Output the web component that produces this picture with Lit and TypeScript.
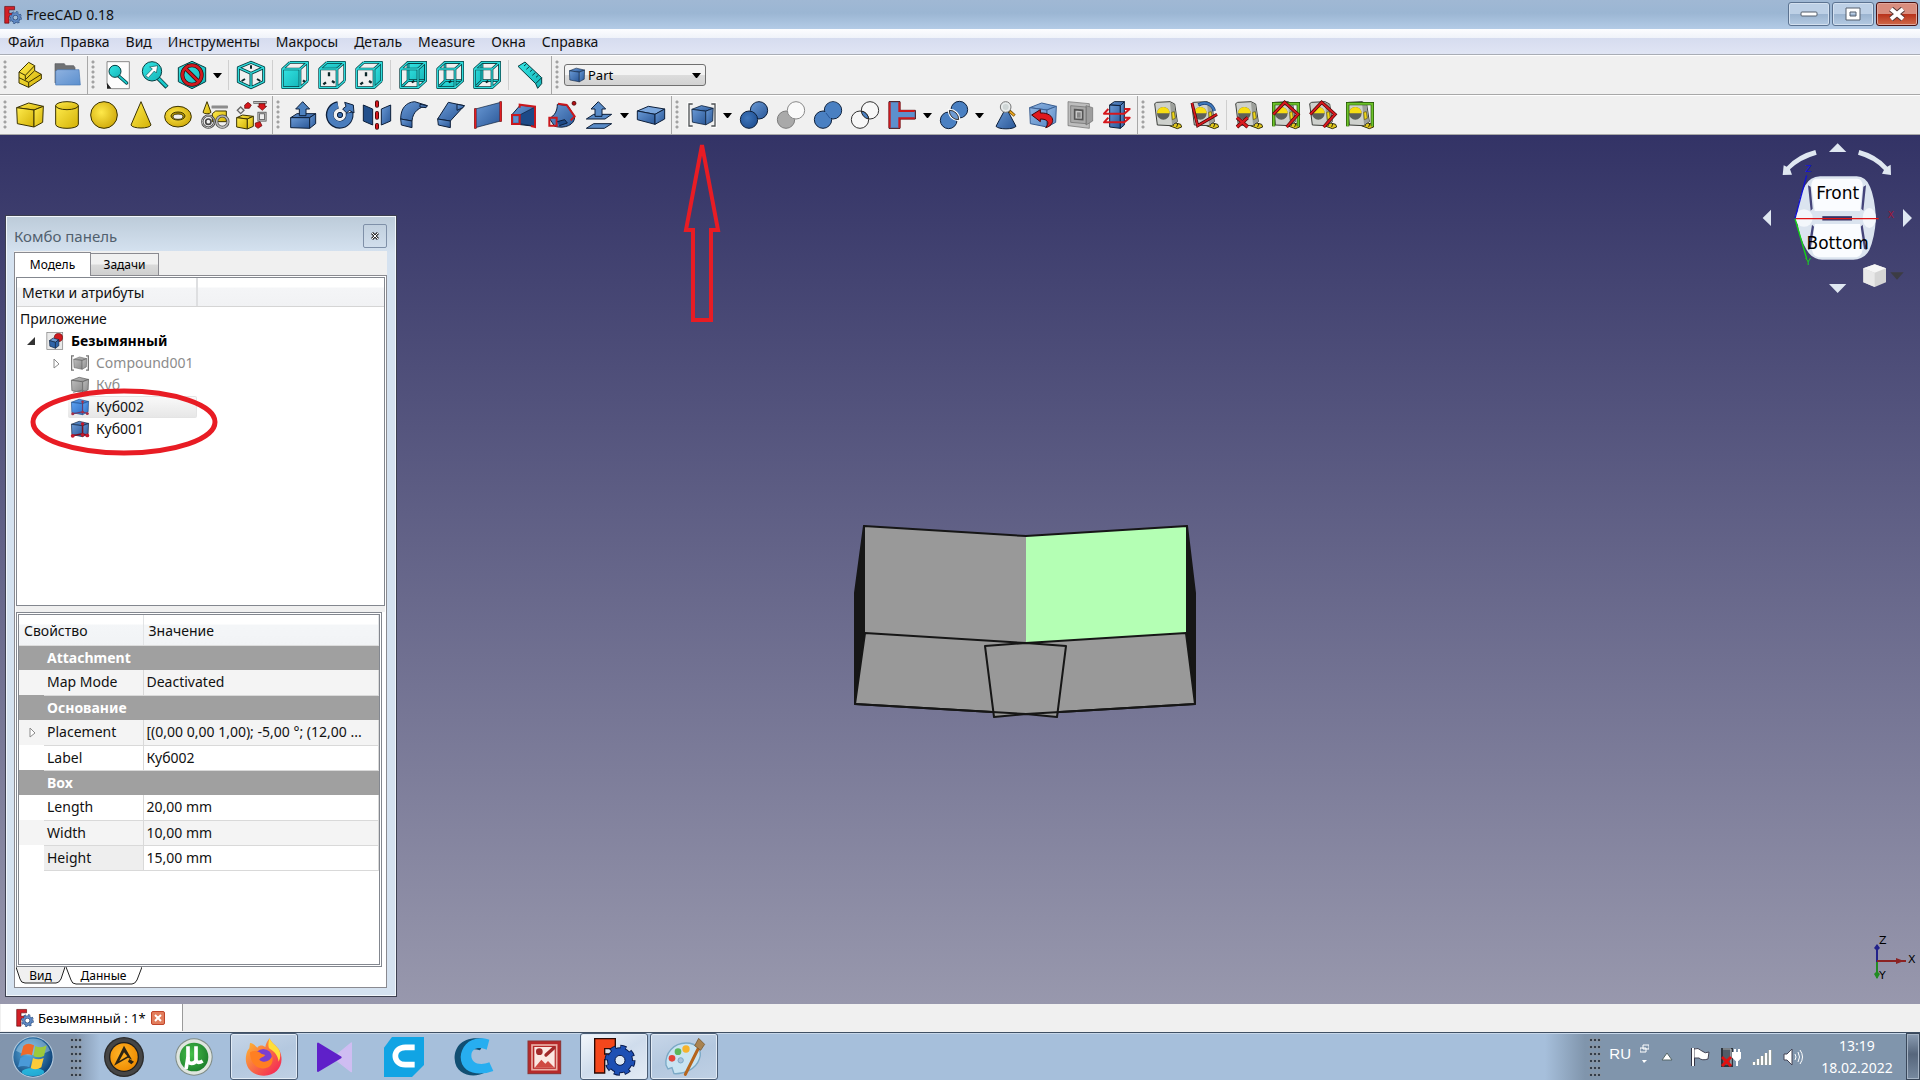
import { LitElement, html, svg, css, nothing } from "lit";
import { customElement, state } from "lit/decorators.js";

type Tool = { id: string; label: string; menu?: boolean } | "sep";

const INK = "#0d1f3a";
const cubeFaces: Record<string, string> = {
  front: "2,22 58,22 58,82 2,82",
  top: "2,22 26,2 82,2 58,22",
  right: "58,22 82,2 82,60 58,82",
  rear: "26,2 82,2 82,60 26,60",
  bottom: "2,82 26,60 82,60 58,82",
  left: "2,22 26,2 26,60 2,82",
};

const wireCube = (face: string) => {
  const back = "M27 4H80V59H27ZM5 80L27 59";
  const near = "M5 24H57V80H5ZM5 24L27 4M57 24L80 4M57 80L80 59M27 4H80V59";
  const fill = svg`<polygon points=${cubeFaces[face]} fill="url(#teal)" />`;
  const behind = face === "rear" || face === "bottom" || face === "left";
  return svg`
    ${behind ? fill : nothing}
    ${behind
      ? svg`<g fill="none" stroke-linejoin="round"><path d=${back} stroke="#063c3f" stroke-width="8" /><path d=${back} stroke="#19c9cb" stroke-width="4" /></g>`
      : svg`<path d="M33 34v12M16 70l8 -6M42 60l8 5" stroke="#0b2527" stroke-width="7" />${face === "front" ? svg`<path d="M66 58l8 6" stroke="#0b2527" stroke-width="7" />` : nothing}${fill}`}
    <g fill="none" stroke-linejoin="round">
      <path d=${near} stroke="#063c3f" stroke-width="8" /><path d=${near} stroke="#2fdcdc" stroke-width="4" />
    </g>
    ${behind ? svg`<path d="M38 64l8 -4" stroke="#0b2527" stroke-width="6" />` : nothing}`;
};

const tape = () => svg`
  <path d="M50 62L80 70L83 78L70 83L46 74Z" fill="#e3c91c" stroke="#35320f" stroke-width="3" />
  <path d="M60 67l-3 8M71 69l-3 9" stroke="#35320f" stroke-width="3" />
  <path d="M2 8L8 4L48 2L62 9L70 62L52 74L10 72Z" fill="#ced1cd" stroke="#3c3f3b" stroke-width="3" stroke-linejoin="round" />
  <path d="M48 4L61 10L68 61L54 71Z" fill="#9c9f9a" />
  <circle cx="28" cy="37" r="19" fill="#5d605a" />
  <path d="M9 37A19 19 0 0 1 47 37Z" fill="#f7dd12" />
  <path d="M53 34l8 -2l3 20l-9 4Z" fill="#f0d51a" stroke="#55510f" stroke-width="2" />`;

const box = (fill: string, stroke: string) => svg`
  <g stroke=${stroke} stroke-width="3" stroke-linejoin="round" fill=${`url(#${fill})`}>
    <polygon points="2,20 38,6 82,16 54,27" /><polygon points="2,20 54,27 54,78 4,68" /><polygon points="54,27 82,16 80,64 54,78" />
  </g>`;

const disc = (x: number, y: number, r: number, fill: string, stroke = INK) =>
  svg`<circle cx=${x} cy=${y} r=${r} fill=${fill} stroke=${stroke} stroke-width="3" />`;

const icons: Record<string, () => unknown> = {
  part: () => svg`<g fill="url(#yellow)" stroke="#3a3203" stroke-width="3" stroke-linejoin="round">
    <path d="M9 33L38 4L56 14V29L76 40V54L38 79L9 66Z" /><path d="M9 33L28 43L56 14M28 43V56L56 29M9 50L38 64L76 40M38 64V79" fill="none" /></g>`,
  folder: () => svg`<path d="M6 8H34L38 14H62L66 20V66H6Z" fill="#6f7174" stroke="#55585c" stroke-width="2" />
    <path d="M14 26H78L82 72H8V30Z" fill="url(#folder)" stroke="#4a78b4" stroke-width="2" />`,
  fit: () => svg`<path d="M9 2H76V83H22L9 70Z" fill="#fdfdfd" stroke="#555" stroke-width="2" /><path d="M9 65L22 83H9Z" fill="#222" />
    <path d="M44 45L68 66" stroke="#063c3f" stroke-width="10" stroke-linecap="round" /><path d="M44 45L68 66" stroke="#19c9cb" stroke-width="5" stroke-linecap="round" />
    ${disc(33, 31, 18, "url(#teal)", "#063c3f")}`,
  zoomsel: () => svg`<path d="M50 50L78 79" stroke="#063c3f" stroke-width="13" /><path d="M51 51L77 77" stroke="#19c9cb" stroke-width="8" />
    ${disc(33, 31, 29, "url(#teal)", "#063c3f")}<path d="M14 44L34 24L26 18L50 14L46 36L40 30L22 50Z" fill="#fff" stroke="#155" stroke-width="2" />`,
  style: () => svg`<polygon points="42,1 83,20 83,62 42,83 1,62 1,20" fill="url(#teal)" stroke="#063c3f" stroke-width="3" />
    <g fill="none"><circle cx="42" cy="42" r="29" stroke="#2b0505" stroke-width="12" /><path d="M22 22L62 62" stroke="#2b0505" stroke-width="12" />
    <circle cx="42" cy="42" r="29" stroke="#d01a1f" stroke-width="8" /><path d="M22 22L62 62" stroke="#d01a1f" stroke-width="8" /></g>`,
  iso: () => svg`<g fill="none" stroke-linejoin="round"><path d="M42 4L80 20V62L42 80L4 62V20ZM4 20L42 37L80 20M42 37V80" stroke="#063c3f" stroke-width="9" />
    <path d="M42 4L80 20V62L42 80L4 62V20ZM4 20L42 37L80 20M42 37V80" stroke="#2fdcdc" stroke-width="4" /></g>
    <path d="M42 13v10M14 60l10 -6M60 54l10 6" stroke="#0b2527" stroke-width="6" />`,
  ruler: () => svg`<path d="M3 16L24 3L74 50L74 68L62 82L56 68Z" fill="url(#teal)" stroke="#063c3f" stroke-width="3" stroke-linejoin="round" />
    <path d="M56 68L74 50M28 9l-7 6M37 17l-9 8M46 26l-7 6M55 35l-9 8M64 43l-7 6" stroke="#063c3f" stroke-width="3" />`,
  cube: () => box("yellow", "#3a3203"),
  cylinder: () => svg`<g fill="url(#yellow)" stroke="#3a3203" stroke-width="3"><path d="M8 14V70C8 86 76 86 76 70V14Z" /><ellipse cx="42" cy="14" rx="34" ry="12" /></g>`,
  sphere: () => disc(42, 42, 40, "url(#yellowr)", "#3a3203"),
  cone: () => svg`<path d="M42 2L72 72C68 84 16 84 12 72Z" fill="url(#yellow)" stroke="#3a3203" stroke-width="3" stroke-linejoin="round" />`,
  torus: () => svg`<g stroke="#3a3203" stroke-width="3"><ellipse cx="42" cy="47" rx="40" ry="31" fill="url(#yellowr)" /><ellipse cx="42" cy="45" rx="21" ry="12" fill="#b99a08" /><ellipse cx="42" cy="47" rx="15" ry="8" fill="#f0f0f0" /></g>`,
  primitives: () => svg`<path d="M32 18H80" stroke="#555" stroke-width="8" /><path d="M33 18H79" stroke="#aaa" stroke-width="4" />
    <g fill="url(#yellow)" stroke="#3a3203" stroke-width="3"><path d="M18 2L30 34C26 40 10 40 6 34Z" /><path d="M34 38L44 30H76V62H34Z" /></g>
    <g fill="none"><circle cx="22" cy="62" r="18" stroke="#444" stroke-width="7" /><circle cx="22" cy="62" r="18" stroke="#bbb" stroke-width="3" />
    <circle cx="22" cy="62" r="8" stroke="#444" stroke-width="5" /><circle cx="64" cy="62" r="17" stroke="#444" stroke-width="9" /><circle cx="64" cy="62" r="17" stroke="#b6b6b6" stroke-width="5" /></g>`,
  builder: () => svg`<g fill="url(#yellow)" stroke="#3a3203" stroke-width="3" stroke-linejoin="round"><path d="M-4 50L14 42L46 46L28 54Z" /><path d="M-4 50L28 54V84L-4 78Z" /><path d="M28 54L46 46V76L28 84Z" /></g>
    <path d="M8 18l10 10l-10 10l-10 -10Z" fill="#eee" stroke="#666" stroke-width="4" /><path d="M46 4H86" stroke="#444" stroke-width="8" /><path d="M47 4H84" stroke="#bbb" stroke-width="4" />
    <rect x="62" y="36" width="20" height="22" fill="#eee" stroke="#444" stroke-width="7" /><rect x="62" y="36" width="20" height="22" fill="none" stroke="#bbb" stroke-width="3" />
    <g fill="#d6171c" stroke="#500" stroke-width="2"><path d="M20 12l10 -8l10 8l-6 10l-14 0Z" /><path d="M63 8h18v8h5l-13 12l-14 -12h4Z" /><path d="M52 66l14 -4l6 12l-12 8l-8 -6Z" /></g>`,
  extrude: () => svg`<g fill="url(#blue)" stroke=${INK} stroke-width="3" stroke-linejoin="round"><path d="M5 50L24 38H80L62 50Z" /><path d="M5 50H62V82L5 80Z" /><path d="M62 50L80 38V68L62 82Z" />
    <path d="M41 2L62 24H51V44H31V24H20Z" fill="#4e82c0" /></g>`,
  revolve: () => svg`<g fill="none"><path d="M36 12A30 30 0 1 0 70 34" stroke=${INK} stroke-width="23" /><path d="M36 13A29 29 0 1 0 70 36" stroke="#4a7dbd" stroke-width="18" /></g>
    <path d="M56 4L82 12L84 36L70 28L62 36L50 24L60 16Z" fill="#4a7dbd" stroke=${INK} stroke-width="3" />
    ${disc(42, 42, 12, "#f4f4f4", "#f4f4f4")}${disc(42, 42, 8, "#3c6eae")}`,
  mirror: () => svg`<g fill="url(#blue)" stroke=${INK} stroke-width="3"><path d="M1 12L29 24V72L1 60Z" fill="#23508c" /><path d="M55 24L83 12V60L55 72Z" /></g>
    <path d="M42 4V14M42 36V50M42 72V80" stroke="#3b0000" stroke-width="12" stroke-linecap="round" /><path d="M42 4V14M42 36V50M42 72V80" stroke="#d6171c" stroke-width="7" stroke-linecap="round" />`,
  fillet: () => svg`<g fill="url(#blue)" stroke=${INK} stroke-width="3" stroke-linejoin="round"><path d="M2 54C2 22 18 4 44 2L82 14C58 18 38 32 36 60Z" /><path d="M2 54L36 60V80L4 72Z" /><path d="M60 10L82 14L78 20L60 18Z" /></g>`,
  chamfer: () => svg`<g fill="url(#blue)" stroke=${INK} stroke-width="3" stroke-linejoin="round"><path d="M2 54L34 4L82 14L40 60Z" /><path d="M2 54L40 60V80L4 72Z" /><path d="M60 10L82 14L78 20L60 28Z" /></g>`,
  face: () => svg`<path d="M4 24L80 4V60L4 80Z" fill="url(#blue)" stroke=${INK} stroke-width="2" />
    <path d="M4 22V83M80 1V62" stroke="#7d0a0c" stroke-width="7" /><path d="M4 24V81M80 3V60" stroke="#e01c20" stroke-width="4" />`,
  loft: () => svg`<path d="M2 42L28 12L72 18V76L4 68Z" fill="url(#blue)" stroke=${INK} stroke-width="3" /><path d="M26 42L72 18V76L26 68Z" fill="#1d4a88" stroke=${INK} stroke-width="2" />
    <path d="M26 20V11L72 17V78L60 75M3 42H26V69H3Z" fill="none" stroke="#c9181d" stroke-width="6" /><rect x="8" y="47" width="13" height="17" fill="#5f93cf" />`,
  sweep: () => svg`<path d="M28 10C28 30 20 44 4 52L20 76C50 84 80 72 80 48L60 14Z" fill="url(#blue)" stroke=${INK} stroke-width="3" />
    <path d="M30 8L56 12L80 46L68 58M4 50H26V74H4Z" fill="none" stroke="#c9181d" stroke-width="6" /><path d="M28 62L50 56L58 66L34 74" fill="#1d4a88" stroke=${INK} stroke-width="3" />
    <circle cx="78" cy="7" r="6" fill="#b01014" stroke="#300" stroke-width="2" />`,
  offset: () => svg`<g fill="#5a8cc8" stroke=${INK} stroke-width="3" stroke-linejoin="round"><path d="M4 54L26 40H80L60 54Z" /><path d="M4 82L26 68H80L58 82Z" /><path d="M40 2L62 24H51V46H30V24H18Z" /></g>`,
  thickness: () => svg`<g fill="url(#blue)" stroke=${INK} stroke-width="3" stroke-linejoin="round"><path d="M1 30L34 16L83 24L54 40Z" fill="#7aa6dc" /><path d="M1 30L54 40V70L1 56Z" /><path d="M54 40L83 24V54L54 70Z" /></g>`,
  compound: () => svg`<g transform="translate(10 9) scale(.8 .8)">${box("blue", INK)}</g><path d="M12 8H2V76H12M72 8H82V76H72" fill="none" stroke="#fff" stroke-width="8" /><path d="M14 9H3V75H14M70 9H81V75H70" fill="none" stroke="#4b4f52" stroke-width="4" />`,
  boolean: () => svg`${disc(57, 28, 26, "url(#blue)")}${disc(27, 56, 26, "url(#bluer)")}`,
  cut: () => svg`${disc(27, 56, 26, "#a9a9a9", "#7c7c7c")}${disc(57, 28, 26, "#fafafa", "#8a8a8a")}`,
  union: () => svg`${disc(57, 28, 26, "#4a80c2")}${disc(27, 56, 26, "#4a80c2")}<circle cx="57" cy="28" r="24" fill="#4a80c2" /><path d="M36 36L48 52" stroke="#2a5797" stroke-width="3" />`,
  common: () => svg`${disc(57, 28, 26, "#f7f7f7", "#333")}${disc(27, 56, 26, "#f7f7f7", "#333")}<path d="M31 30A26 26 0 0 1 53 54A26 26 0 0 1 31 30Z" fill="#4a80c2" stroke="#222" stroke-width="3" />`,
  join: () => svg`<path d="M3 2H36V28H82V54H36V82H3Z" fill="#5c90ce" stroke="#3b0a10" stroke-width="3" /><path d="M5 4V80M34 4V30H80M80 52H34V80" fill="none" stroke="#c9181d" stroke-width="6" />`,
  split: () => svg`${disc(58, 26, 25, "#4a80c2")}${disc(26, 58, 25, "#4a80c2")}<path d="M28 28A27 27 0 0 1 56 56A27 27 0 0 1 28 28Z" fill="#4a80c2" stroke="#fff" stroke-width="9" /><path d="M28 28A27 27 0 0 1 56 56A27 27 0 0 1 28 28Z" fill="#6d9bd3" stroke="#333" stroke-width="3" />`,
  check: () => svg`<path d="M42 20L72 76C64 86 20 86 12 76Z" fill="url(#blue)" stroke=${INK} stroke-width="3" /><path d="M52 30L68 44" stroke="#6b4a08" stroke-width="9" /><path d="M54 32L67 43" stroke="#f0a820" stroke-width="5" />${disc(41, 18, 16, "#e8ecec", "#777")}<circle cx="41" cy="18" r="9" fill="#cfd6d6" />`,
  defeature: () => svg`${box("soft", "#3b5f92")}<path d="M8 42L34 26V36C78 34 82 72 50 80C62 66 58 54 34 54V62Z" fill="#e01a1f" stroke="#4a0506" stroke-width="3" stroke-linejoin="round" />`,
  offset3d: () => svg`<g stroke="#6a6a6a" stroke-width="2"><path d="M6 2L70 8V82L6 74Z" fill="#bdbdbd" /><path d="M60 14L80 20V60L60 72Z" fill="#9d9d9d" /><path d="M14 14L60 18V68L14 64Z" fill="#a9a9a9" /></g><path d="M26 26L50 28V56L26 54Z" fill="#c8c8c8" stroke="#555" stroke-width="5" /><path d="M33 34H44V50H33Z" fill="#888" />`,
  sections: () => svg`<g fill="url(#blue)" stroke=${INK} stroke-width="3" stroke-linejoin="round"><path d="M20 12L34 2H64L52 14Z" /><path d="M20 12L52 14V82L20 78Z" /><path d="M52 14L64 2V72L52 82Z" /></g>
    <g fill="none" stroke="#d6171c" stroke-width="6" stroke-linejoin="round"><path d="M16 24L3 38H64L80 24H64" /><path d="M16 50L3 64H64L80 50H64" /></g>`,
  mlinear: () => tape(),
  mangular: () => svg`${tape()}<path d="M22 12C42 0 64 8 70 30" fill="none" stroke="#173c70" stroke-width="10" /><path d="M22 12C42 0 64 8 70 30" fill="none" stroke="#3f77ba" stroke-width="6" /><path d="M3 6L20 74L78 40" fill="none" stroke="#4a0506" stroke-width="9" /><path d="M3 6L20 74L78 40" fill="none" stroke="#d81a1f" stroke-width="5" />`,
  mclear: () => svg`${tape()}<path d="M6 50L38 78M38 50L6 78" stroke="#4a0506" stroke-width="11" /><path d="M6 50L38 78M38 50L6 78" stroke="#d81a1f" stroke-width="7" />`,
  mtoggle: () => svg`${tape()}<path d="M5 76V8H79V76" fill="none" stroke="#1f4a05" stroke-width="10" /><path d="M5 76V8H79V76" fill="none" stroke="#6cc22a" stroke-width="6" />
    <path d="M4 40L38 4L78 40L44 78" fill="none" stroke="#4a0506" stroke-width="10" /><path d="M4 40L38 4L78 40L44 78" fill="none" stroke="#d81a1f" stroke-width="6" />`,
  mtoggle3d: () => svg`${tape()}<path d="M4 40L38 4L78 40L44 78" fill="none" stroke="#4a0506" stroke-width="10" /><path d="M4 40L38 4L78 40L44 78" fill="none" stroke="#d81a1f" stroke-width="6" />`,
  mdelta: () => svg`${tape()}<path d="M5 76V8H79V76" fill="none" stroke="#1f4a05" stroke-width="10" /><path d="M5 76V8H79V76" fill="none" stroke="#6cc22a" stroke-width="6" />`,
  document: () => svg`<rect x="4" y="2" width="74" height="80" fill="#e9e9e9" stroke="#777" stroke-width="3" />${disc(58, 26, 19, "#d01a1f", "#600")}
    <g fill="#2f64a8" stroke=${INK} stroke-width="3" stroke-linejoin="round"><path d="M16 40L34 28L60 36L44 48Z" fill="#6d9bd3" /><path d="M16 40L44 48V76L18 66Z" /><path d="M44 48L60 36V64L44 76Z" /></g>`,
  compoundgray: () => svg`<g transform="translate(11 9) scale(.76 .8)">${box("gray", "#555")}</g><path d="M14 9H3V75H14M70 9H81V75H70" fill="none" stroke="#777" stroke-width="6" />`,
  boxgray: () => svg`${box("gray", "#555")}<path d="M54 27V66L10 76M54 66L78 76" stroke="#777" stroke-width="5" fill="none" />`,
  boxlight: () => svg`${box("bright", "#1c4c8c")}<path d="M54 20V64L8 74M54 64L76 72" stroke="#6b3a6d" stroke-width="5" fill="none" /><g fill="#a33048"><circle cx="54" cy="18" r="6" /><circle cx="8" cy="74" r="7" /><circle cx="54" cy="66" r="6" /><circle cx="76" cy="72" r="7" /></g>`,
  boxblue: () => svg`${box("blue", INK)}<path d="M54 20V64L8 74M54 64L76 72" stroke="#7c1020" stroke-width="7" fill="none" /><g fill="#c4182a"><circle cx="54" cy="18" r="8" /><circle cx="8" cy="74" r="9" /><circle cx="54" cy="70" r="8" /><circle cx="76" cy="72" r="9" /></g>`,
  bluebox: () => box("blue", INK),
  freecad: () => svg`<path d="M8 2H54V18H28V34H46V48H28V80H8Z" fill="#d21f26" stroke="#5d0a0d" stroke-width="3" />
    <circle cx="58" cy="54" r="17" fill="none" stroke="#24426f" stroke-width="14" /><circle cx="58" cy="54" r="25" fill="none" stroke="#24426f" stroke-width="9" stroke-dasharray="10 9.6" />
    <circle cx="58" cy="54" r="17" fill="none" stroke="#6089c4" stroke-width="9" /><circle cx="58" cy="54" r="24" fill="none" stroke="#6089c4" stroke-width="7" stroke-dasharray="8 10.8" stroke-dashoffset="-1" />`,
};
for (const f of Object.keys(cubeFaces)) icons[`view-${f}`] = () => wireCube(f);

const icon = (id: string, size = "i28") =>
  html`<svg class=${size} viewBox="0 0 84 84" aria-hidden="true">${icons[id]()}</svg>`;

const taskIcons: Record<string, () => unknown> = {
  aimp: () => svg`<circle cx="60" cy="60" r="60" fill="#2b2b2b" /><circle cx="60" cy="60" r="56" fill="#454545" /><circle cx="60" cy="60" r="45" fill="#1e1e1e" /><circle cx="60" cy="60" r="41" fill="url(#amber)" />
    <path d="M60 26L84 68L72 62L30 86Z" fill="#2d2414" /><path d="M60 46L46 72L70 58Z" fill="#fba81a" /><path d="M76 66L90 74L82 82L72 74Z" fill="#2d2414" />`,
  utorrent: () => svg`<circle cx="60" cy="60" r="56" fill="#7f8c86" /><circle cx="60" cy="60" r="53" fill="#dfe5df" /><circle cx="60" cy="60" r="43" fill="url(#green)" />
    <path d="M42 28V70C42 82 62 82 66 70V28V66C66 78 76 78 86 72" fill="none" stroke="#fff" stroke-width="11" /><path d="M42 60L36 96" stroke="#fff" stroke-width="11" />`,
  firefox: () => svg`<path d="M18 18C26 18 34 26 40 32C48 22 58 26 64 30C66 16 76 6 76 4C84 20 98 26 106 40C124 76 104 116 60 116C18 116 2 84 6 58C8 44 12 38 16 34Z" fill="url(#fire)" />
    <path d="M76 4C84 20 98 26 106 40C110 50 110 64 104 74C102 56 92 44 78 36C70 32 74 14 76 4Z" fill="#ffde3a" />
    <circle cx="58" cy="62" r="26" fill="#7a3fd0" /><path d="M18 46C30 40 42 40 52 50L64 54C58 62 50 60 46 68C58 80 78 74 84 58C92 84 70 98 52 94C30 90 18 70 18 46Z" fill="#ff7f22" />`,
  player: () => svg`<path d="M112 18V104L58 62Z" fill="#cfbdf2" stroke="#cfbdf2" stroke-width="4" stroke-linejoin="round" /><path d="M12 20V102L80 61Z" fill="#5f20c9" stroke="#5f20c9" stroke-width="6" stroke-linejoin="round" />`,
  cura: () => svg`<path d="M24 0H120V84L84 120H0V32Z" fill="#11a4e4" /><path d="M92 31H64C24 31 24 83 64 83H92" fill="none" stroke="#fff" stroke-width="17" />`,
  ccc: () => svg`<path d="M98 8C30 -8 0 28 2 66C4 116 60 124 90 108L78 84C50 92 34 80 34 62C34 40 52 32 78 40Z" fill="#114f73" /><path d="M106 8C50 -8 22 28 20 60C20 106 70 120 118 102L106 76C74 88 52 76 52 56C52 34 74 28 98 38Z" fill="#27aef0" />`,
  viewer: () => svg`<rect x="12" y="12" width="98" height="98" fill="#b62a2a" stroke="#8a3434" stroke-width="3" /><rect x="24" y="24" width="74" height="74" fill="none" stroke="#eab0a6" stroke-width="5" /><rect x="31" y="30" width="61" height="62" fill="#fbe8e2" />
    <circle cx="46" cy="44" r="10" fill="#a22a2a" /><path d="M66 54L90 32" stroke="#a22a2a" stroke-width="10" stroke-linecap="round" /><path d="M32 92L52 68L64 80L72 72L92 92Z" fill="#cf4a42" />`,
  freecad: () => svg`<path d="M2 5H64V35H32V51H54V68H32V108H2Z" fill="#f4471c" stroke="#2b0a05" stroke-width="4" />
    <circle cx="78" cy="70" r="38" fill="none" stroke="#081a4c" stroke-width="17" stroke-dasharray="17 12.8" /><circle cx="78" cy="70" r="25" fill="none" stroke="#081a4c" stroke-width="28" />
    <circle cx="78" cy="70" r="37" fill="none" stroke="#1d4fb4" stroke-width="13" stroke-dasharray="13 16" stroke-dashoffset="-2" /><circle cx="78" cy="70" r="25" fill="none" stroke="#1d4fb4" stroke-width="22" /><circle cx="78" cy="70" r="15" fill="#dde8f4" stroke="#081a4c" stroke-width="3" />`,
  paint: () => svg`<path d="M6 84C2 48 30 18 66 18C100 18 116 42 106 66C96 96 60 112 30 110L24 92L12 96Z" fill="#c9e4f2" stroke="#7ba9c6" stroke-width="4" /><circle cx="50" cy="70" r="8" fill="#a9c3dc" stroke="#7ba9c6" stroke-width="3" />
    <circle cx="24" cy="64" r="10" fill="#e2443a" /><circle cx="42" cy="44" r="10" fill="#5cb85a" /><circle cx="66" cy="36" r="11" fill="#f6b32c" />
    <path d="M102 36L64 112" stroke="#b5651d" stroke-width="9" stroke-linecap="round" /><path d="M92 26L104 4L122 22L110 40Z" fill="#a98350" stroke="#6d4c21" stroke-width="2" />`,
};

const GROUP_A: Tool[][] = [
  [{ id: "part", label: "Создать деталь" }, { id: "folder", label: "Создать группу" }],
  [
    { id: "fit", label: "Показать всё" }, { id: "zoomsel", label: "Показать выделенное" }, { id: "style", label: "Стиль отображения", menu: true }, "sep",
    { id: "iso", label: "Изометрия" }, "sep",
    { id: "view-front", label: "Спереди" }, { id: "view-top", label: "Сверху" }, { id: "view-right", label: "Справа" }, "sep",
    { id: "view-rear", label: "Сзади" }, { id: "view-bottom", label: "Снизу" }, { id: "view-left", label: "Слева" }, "sep",
    { id: "ruler", label: "Измерить расстояние" },
  ],
];
const GROUP_B: Tool[][] = [
  [
    { id: "cube", label: "Куб" }, { id: "cylinder", label: "Цилиндр" }, { id: "sphere", label: "Сфера" }, { id: "cone", label: "Конус" },
    { id: "torus", label: "Тор" }, { id: "primitives", label: "Примитивы" }, { id: "builder", label: "Построитель фигур" },
  ],
  [
    { id: "extrude", label: "Выдавить" }, { id: "revolve", label: "Вращать" }, { id: "mirror", label: "Отразить" }, { id: "fillet", label: "Скругление" },
    { id: "chamfer", label: "Фаска" }, { id: "face", label: "Поверхность" }, { id: "loft", label: "Профиль" }, { id: "sweep", label: "Сдвиг" },
    { id: "offset", label: "Смещение", menu: true }, { id: "thickness", label: "Толщина" },
  ],
  [
    { id: "compound", label: "Соединение", menu: true }, { id: "boolean", label: "Логическая операция" }, { id: "cut", label: "Обрезать" }, { id: "union", label: "Объединение" },
    { id: "common", label: "Пересечение" }, { id: "join", label: "Соединить", menu: true }, { id: "split", label: "Разделить", menu: true }, { id: "check", label: "Проверка геометрии" },
    { id: "defeature", label: "Удалить элементы" }, { id: "offset3d", label: "Трёхмерное смещение" }, { id: "sections", label: "Сечения" },
  ],
  [
    { id: "mlinear", label: "Линейный размер" }, { id: "mangular", label: "Угловой размер" }, "sep", { id: "mclear", label: "Очистить" },
    { id: "mtoggle", label: "Показать всё" }, { id: "mtoggle3d", label: "Показать 3D" }, { id: "mdelta", label: "Показать дельты" },
  ],
];

const MENU = ["Файл", "Правка", "Вид", "Инструменты", "Макросы", "Деталь", "Measure", "Окна", "Справка"];

type Prop = { group: string } | { name: string; value: string; expand?: boolean; tone?: string };
const PROPS: Prop[] = [
  { group: "Attachment" },
  { name: "Map Mode", value: "Deactivated", tone: "alt" },
  { group: "Основание" },
  { name: "Placement", value: "[(0,00 0,00 1,00); -5,00 °; (12,00 ...", expand: true, tone: "alt" },
  { name: "Label", value: "Куб002" },
  { group: "Box" },
  { name: "Length", value: "20,00 mm" },
  { name: "Width", value: "10,00 mm", tone: "alt" },
  { name: "Height", value: "15,00 mm", tone: "current" },
];

const TASKS = [
  { id: "aimp", label: "AIMP" }, { id: "utorrent", label: "µTorrent" }, { id: "firefox", label: "Firefox", open: "open" }, { id: "player", label: "Плеер" },
  { id: "cura", label: "Cura" }, { id: "ccc", label: "C" }, { id: "viewer", label: "Просмотр" }, { id: "freecad", label: "FreeCAD", open: "open active" },
  { id: "paint", label: "Paint", open: "open" },
];

@customElement("app-root")
export class AppRoot extends LitElement {
  @state() private workbench = "Part";

  static styles = css`
    :host { display: flex; flex-direction: column; min-height: 100vh; background: #f0f0f0; color: #111; font: 14px/20px "Noto Sans", "Open Sans", sans-serif; overflow: hidden; }
    * { box-sizing: border-box; }
    button { font: inherit; color: inherit; border: 0; background: none; padding: 0; margin: 0; display: flex; align-items: center; justify-content: center; }
    a { color: inherit; text-decoration: none; }
    svg { display: block; flex: none; }
    .defs { position: absolute; width: 0; height: 0; }
    .i28 { width: 28px; height: 28px; overflow: visible; }
    .i18 { width: 18px; height: 18px; overflow: visible; }

    .title { height: 29px; display: flex; align-items: center; gap: 5px; padding: 0 2px 0 3px; background: linear-gradient(#a0b8d4, #9bb6d3 45%, #b3cbe6); }
    .title h1 { font-size: 14px; font-weight: 400; margin: 0; flex: 1; }
    .winset { display: flex; gap: 2px; align-self: flex-start; padding-top: 2px; }
    .win { width: 42px; height: 24px; border: 1px solid #5c7391; border-radius: 3px; box-shadow: inset 0 0 0 1px #d3e0ef; background: linear-gradient(#bdd0e6 48%, #9bb4d0 52%, #b4cae2); }
    .win.close { border-color: #4b1010; box-shadow: inset 0 0 0 1px #e0a79c; background: linear-gradient(#d98d7e 48%, #b9331c 52%, #cf6a4a); }

    .menu { height: 26px; display: flex; align-items: center; gap: 16px; padding: 1px 8px 0; border-bottom: 1px solid #a9adb5; background: linear-gradient(#fdfdff 0, #f0f3fa 35%, #d6dcef 36%, #e0e5f4); }
    .bar { height: 40px; display: flex; border-bottom: 1px solid #a8a8a8; border-top: 1px solid #fff; }
    .group { display: flex; align-items: center; padding-right: 2px; border-right: 1px solid #a8a8a8; }
    .bar .group:last-child { border-right: 0; }
    .handle { width: 11px; align-self: stretch; margin: 4px 0; background: radial-gradient(circle at 5px 2px, #a2a2a2 1px, transparent 2px) 0 0 / 11px 5px; }
    .tool { width: 37px; height: 38px; }
    .drop { width: 15px; height: 38px; }
    .sep { width: 1px; height: 30px; margin: 0 3px; background: #cfcfcf; }
    .bench { position: relative; display: flex; align-items: center; margin-left: 1px; }
    .bench select { appearance: none; width: 142px; height: 22px; padding: 0 20px 0 23px; border: 1px solid #707070; border-radius: 3px; background: linear-gradient(#f3f3f3 50%, #dcdcdc 51%, #d2d2d2); font: inherit; font-size: 13px; line-height: 20px; color: #000; }
    .bench .lead, .bench .chev { position: absolute; pointer-events: none; }
    .bench .lead { left: 5px; width: 16px; height: 16px; }
    .bench .chev { right: 5px; }

    .view { flex: 1; position: relative; overflow: hidden; background: linear-gradient(#333366, #9898ad); }
    .scene, .pointer, .nav, .axes, .ring { position: absolute; overflow: visible; }
    .scene { left: 850px; top: 385px; width: 350px; height: 200px; }
    .pointer { left: 680px; top: 4px; width: 44px; height: 184px; }
    .nav { right: 0; top: 0; width: 180px; height: 165px; font: 51px "DejaVu Sans", sans-serif; }
    .axes { right: 0; bottom: 12px; width: 50px; height: 60px; font: 11px "DejaVu Sans", sans-serif; }
    .ring { left: 24px; top: 252px; width: 188px; height: 70px; pointer-events: none; }

    .panel { position: absolute; left: 5px; top: 80px; bottom: 7px; width: 392px; display: flex; flex-direction: column; padding: 0 9px 8px 8px; border: 1px solid #3d4050; box-shadow: inset 0 0 0 1px #f2f7fc; background: linear-gradient(#bccbd9, #d5e2f0 37px); }
    .caption { height: 35px; display: flex; align-items: center; justify-content: space-between; padding-top: 5px; color: #51606e; }
    .caption h2 { font-size: 15px; font-weight: 400; margin: 0; }
    .caption button { width: 24px; height: 24px; border: 1px solid #7f90a8; border-radius: 2px; }
    .tabs { height: 24px; display: flex; align-items: flex-end; background: #f0f0f0; font-size: 12px; }
    .tabs button { height: 22px; width: 68px; border: 1px solid #8a8a90; border-left: 0; border-bottom: 0; background: linear-gradient(#f1f1f1 48%, #dadada 52%, #cfcfcf); color: #000; }
    .tabs button.on { height: 24px; width: 77px; margin-bottom: -1px; border-left: 1px solid #8a8a90; background: #fff; z-index: 1; }
    .pane { flex: 1; min-height: 0; display: flex; flex-direction: column; padding: 1px; border: 1px solid #8a8a90; background: #fff; }
    .tree { flex: 331 1 0; min-height: 0; border: 1px solid #83878f; }
    .treehead { display: flex; height: 29px; border-bottom: 1px solid #d5d5d5; background: linear-gradient(#fff 9px, #f4f5f7 10px, #f1f2f4); }
    .treehead span { width: 181px; padding: 5px 5px 0; border-right: 2px solid #dedfe1; }
    .tree ul { list-style: none; margin: 0; padding: 1px 0 0; }
    .tree li { height: 22px; display: flex; align-items: center; gap: 7px; }
    .tree .root { padding-left: 3px; }
    .tree .doc { padding-left: 9px; font-weight: 700; color: #000; }
    .tree .doc .tri { margin-right: 4px; }
    .tree .obj { width: 180px; padding-left: 54px; }
    .tree .obj.kids { padding-left: 35px; }
    .tree .obj.kids .tri { margin-right: 3px; }
    .tree .dim { color: #8c8c8c; }
    .tree .hl { width: 129px; margin-left: 51px; padding-left: 3px; border-radius: 2px; border: 1px solid #e4e4e4; border-left: 0; background: linear-gradient(#f9f9f9, #e7e7e7); }
    .split { height: 6px; background: #f0f0f0; }
    .props { flex: 355 1 0; min-height: 0; margin-right: 3px; padding: 1px; border: 1px solid #83878f; }
    .propbox { height: 100%; border: 1px solid #83878f; }
    table { width: 100%; border-collapse: collapse; table-layout: fixed; }
    th, td { padding: 0; text-align: left; font-weight: 400; height: 25px; line-height: 24px; white-space: nowrap; overflow: hidden; }
    col.ind { width: 25px; }
    col.nam { width: 99px; }
    thead th { height: 30px; padding: 2px 5px 0; border-bottom: 1px solid #dcdcdc; border-right: 1px solid #e2e4e6; background: linear-gradient(#fff 9px, #f4f6f8 10px, #f1f3f5); }
    .cat th { background: #a0a0a0; color: #fff; font-weight: 700; padding-left: 3px; }
    .cat td { background: #a0a0a0; }
    .row th { padding-left: 3px; border-bottom: 1px solid #d9d9d9; border-right: 1px solid #d9d9d9; }
    .row .val { padding-left: 3px; border-bottom: 1px solid #d9d9d9; border-right: 1px solid #d9d9d9; }
    .row .lead { padding-left: 9px; }
    .alt { background: #f4f4f4; }
    .current th { background: #eee; }
    .foot { display: flex; height: 19px; font-size: 12px; }
    .foot button { position: relative; height: 17px; color: #000; line-height: 16px; }
    .foot button span { position: relative; }
    .foot svg { position: absolute; left: 0; top: 0; }
    .foot .a { width: 49px; }
    .foot .b { width: 77px; }

    .docs { height: 28px; display: flex; background: #f0f0f0; }
    .doctab { display: flex; align-items: center; gap: 5px; padding: 0 17px 0 14px; margin: 0 0 1px 1px; border-right: 1px solid #9a9a9a; background: #fff; font-size: 13px; color: #000; }
    .doctab button { width: 14px; height: 14px; border: 1px solid #c0442a; border-radius: 2px; background: #e27d5c; }

    .task { height: 48px; display: flex; align-items: stretch; border-top: 1px solid #3f4f63; background: linear-gradient(90deg, #8295ad 0, #8295ad 75px, #a6bfdb 100px, #a6bfdb calc(100% - 375px), #8095ac calc(100% - 335px)); box-shadow: inset 0 1px 0 #c6d6e8; }
    .start { width: 42px; margin-left: 12px; }
    .grip { width: 12px; margin: 4px 0 4px 16px; background: radial-gradient(circle at 2px 3px, #333d4a 1px, #c3cfdc 2px, transparent 2px) 0 0 / 4px 7px; }
    .apps { flex: 1; display: flex; gap: 2px; margin-left: 8px; }
    .app { width: 68px; }
    .app svg { width: 40px; height: 40px; overflow: visible; }
    .app.open { border: 1px solid #4b5d75; border-radius: 3px; box-shadow: inset 0 0 0 1px #e2ebf5; background: linear-gradient(160deg, #c7d6e8, #b4c8df 50%, #bfd0e4); }
    .app.active { background: linear-gradient(150deg, #f3f7fb, #cfdcec 50%, #e3ebf5); }
    .tray { display: flex; align-items: center; color: #fff; }
    .tray .grip { align-self: stretch; margin-left: 0; }
    .lang { margin: 0 9px 6px 8px; font: 15px/20px "Liberation Sans", sans-serif; }
    .tray .kb { margin-bottom: 6px; }
    .tray .more { margin: 0 11px 0 12px; }
    .tray .sys { width: 20px; height: 20px; margin: 0 5px 0 6px; }
    .clock { width: 84px; margin: 0 7px 0 7px; text-align: center; font-size: 14px; line-height: 22px; }
    .peek { width: 14px; align-self: stretch; border: 1px solid #39475a; box-shadow: inset 0 0 0 1px #a5b3c4; background: linear-gradient(#8c9db3, #56667c 45%, #77899f); }
  `;

  private defs() {
    const lin = (id: string, a: string, b: string) => svg`<linearGradient id=${id} x1="0" y1="0" x2="1" y2="1"><stop offset="0" stop-color=${a} /><stop offset="1" stop-color=${b} /></linearGradient>`;
    const rad = (id: string, a: string, b: string) => svg`<radialGradient id=${id} cx=".4" cy=".4" r=".65"><stop offset="0" stop-color=${a} /><stop offset="1" stop-color=${b} /></radialGradient>`;
    return html`<svg class="defs" aria-hidden="true"><defs>
      ${lin("yellow", "#ffec4e", "#d3b106")}${rad("yellowr", "#ffe94a", "#cfa90a")}${lin("blue", "#6a9ad6", "#2a5797")}${rad("bluer", "#3f76bb", "#1f4f92")}
      ${lin("bright", "#5ea2f0", "#2f6fc6")}${lin("soft", "#8fb4e0", "#5f8fca")}${lin("teal", "#34e6e4", "#14b4b8")}${lin("gray", "#bdbdbd", "#8b8b8b")}${lin("folder", "#8fb2e0", "#5b8fce")}
      ${rad("amber", "#ffb52a", "#f08c00")}${rad("green", "#46c04a", "#1d7f2c")}${lin("fire", "#ffc22e", "#f3195a")}${rad("orb", "#5fb3e6", "#0b3f74")}
    </defs></svg>`;
  }

  private chevron(cls = "") {
    return html`<svg class=${cls} width="9" height="5" viewBox="0 0 9 5" aria-hidden="true"><path d="M0 0H9L5 5H4Z" fill="#000" /></svg>`;
  }

  private group(tools: Tool[]) {
    return html`<div class="group"><span class="handle"></span>${tools.map((t) =>
      t === "sep"
        ? html`<span class="sep"></span>`
        : html`<button class="tool" aria-label=${t.label}>${icon(t.id)}</button>${t.menu ? html`<button class="drop" aria-label=${t.label + " — меню"}>${this.chevron()}</button>` : nothing}`
    )}</div>`;
  }

  private tri(open: boolean) {
    return html`<svg class="tri" width="9" height="11" viewBox="0 0 9 11" aria-hidden="true">${open ? svg`<path d="M9 1V9H1Z" fill="#333" />` : svg`<path d="M2 1L7 6L2 10Z" fill="#fff" stroke="#8a8a8a" />`}</svg>`;
  }

  private panel() {
    return html`<section class="panel">
      <div class="caption"><h2>Комбо панель</h2>
        <button aria-label="Закрыть панель"><svg width="8" height="8" viewBox="0 0 8 8"><path d="M1 1L7 7M7 1L1 7" stroke="#333" stroke-width="3" /><path d="M1 1L7 7M7 1L1 7" stroke="#fff" /></svg></button>
      </div>
      <div class="tabs"><button class="on">Модель</button><button>Задачи</button></div>
      <div class="pane">
        <div class="tree">
          <div class="treehead"><span>Метки и атрибуты</span></div>
          <ul>
            <li class="root">Приложение</li>
            <li class="doc">${this.tri(true)}${icon("document", "i18")}Безымянный</li>
            <li class="obj kids dim">${this.tri(false)}${icon("compoundgray", "i18")}Compound001</li>
            <li class="obj dim">${icon("boxgray", "i18")}Куб</li>
            <li class="obj hl">${icon("boxlight", "i18")}Куб002</li>
            <li class="obj">${icon("boxblue", "i18")}Куб001</li>
          </ul>
        </div>
        <div class="split"></div>
        <div class="props"><div class="propbox">
          <table>
            <colgroup><col class="ind" /><col class="nam" /><col /></colgroup>
            <thead><tr><th colspan="2">Свойство</th><th>Значение</th></tr></thead>
            <tbody>${PROPS.map((p) => "group" in p
              ? html`<tr class="cat"><td></td><th colspan="2">${p.group}</th></tr>`
              : html`<tr class="row ${p.tone ?? ""}"><td class="lead">${p.expand ? this.tri(false) : nothing}</td><th scope="row">${p.name}</th><td class="val">${p.value}</td></tr>`)}
            </tbody>
          </table>
        </div></div>
        <div class="foot">
          <button class="a"><svg width="49" height="17" viewBox="0 0 49 17"><path d="M0 0L4 12Q5 16 9 16H40Q43 16 45 12L49 0" fill="#f0f0f0" stroke="#222" /></svg><span>Вид</span></button>
          <button class="b"><svg width="77" height="18" viewBox="0 0 77 18"><path d="M1 0L6 13Q7 17 11 17H67Q70 17 72 13L77 0" fill="#fff" stroke="#222" /></svg><span>Данные</span></button>
        </div>
      </div>
    </section>`;
  }

  private scene() {
    return html`<svg class="scene" viewBox="850 520 350 200" role="img" aria-label="Модель">
      <g stroke="#161616" stroke-width="2" stroke-linejoin="round">
        <path d="M864 526L855 593V704L865 633Z" fill="#161616" /><path d="M1187 526L1195 593V704L1186 633Z" fill="#161616" />
        <path d="M864 526L1026 536V643L865 633Z" fill="#999" stroke="none" /><path d="M1026 536L1187 526V633L1026 643Z" fill="#b4ffb4" stroke="none" />
        <path d="M865 633L1026 643L1186 633L1195 704L1026 714L855 704Z" fill="#999" />
        <path d="M864 633V526L1026 536L1187 526V633" fill="none" />
        <path d="M985 646L1026 643L1066 646L1057 717L1026 714L994 717Z" fill="#999" />
        <path d="M855 704L1026 714L1195 704" fill="none" />
      </g></svg>`;
  }

  private nav() {
    return html`<svg class="nav" viewBox="0 405 540 495" role="img" aria-label="Навигационный куб">
      <g fill="#dfe7f1"><path d="M267 456H319L293 430ZM267 852H319L293 879ZM93 629V678L68 654ZM489 627V681L516 654Z" />
        <path d="M226 450L230 464Q180 478 150 508L156 524L128 525L131 496L140 500Q172 464 226 450ZM358 450L354 464Q404 478 432 510L426 521L453 525L452 494L442 500Q410 464 358 450Z" /></g>
      <path d="M240 529H350Q378 530 390 560Q404 590 408 655Q404 715 388 750Q374 778 340 779H246Q216 778 200 750Q178 715 170 655Q176 590 196 556Q210 530 240 529Z" fill="#dbe4ef" />
      <path d="M204 556L212 560L218 626L212 632ZM378 556L370 560L364 626L370 632ZM204 750L212 746L222 680L216 674ZM380 750L372 746L362 680L368 674Z" fill="#44447a" />
      <path d="M228 536H352Q366 536 368 556L360 633H224L214 556Q216 536 228 536Z" fill="#fafcff" /><path d="M224 672H360L368 748Q366 768 350 772H236Q218 770 216 748Z" fill="#fafcff" />
      <circle cx="192" cy="654" r="26" fill="#f3f7fb" /><ellipse cx="388" cy="654" rx="20" ry="30" fill="#f3f7fb" />
      <path d="M247 655H336" stroke="#333366" stroke-width="13" /><path d="M165 656H416" stroke="#e01515" stroke-width="4" />
      <path d="M165 656L200 526" stroke="#1111d8" stroke-width="4" /><path d="M165 656L200 776" stroke="#12d812" stroke-width="4" />
      <text x="293" y="597" text-anchor="middle" fill="#000">Front</text><text x="293" y="746" text-anchor="middle" fill="#000">Bottom</text>
      <g font-size="28"><text x="196" y="516" fill="#1111d8">Z</text><text x="196" y="794" fill="#12d812">Y</text><text x="443" y="654" fill="#a01838">X</text></g>
      <path d="M404 793L438 805V847L404 861L370 847V805Z" fill="#d5d5d5" /><path d="M404 793L438 805L404 818L370 805Z" fill="#f6f6f6" /><path d="M370 805L404 818V861L370 847Z" fill="#e9e9e9" />
      <path d="M451 817H491L471 839Z" fill="#3c3c44" /></svg>`;
  }

  private tray() {
    return html`<div class="tray"><span class="grip"></span><span class="lang">RU</span>
      <svg class="kb" width="9" height="20" viewBox="0 0 9 20"><path d="M3 1H9V5H3ZM0 4H6V8H0Z" fill="#8095ac" stroke="#fff" /><path d="M2 16H7L4 19Z" fill="#fff" /></svg>
      <svg class="more" width="12" height="8" viewBox="0 0 12 8"><path d="M6 0L11 7H1Z" fill="#fff" stroke="#566" /></svg>
      <svg class="sys" viewBox="0 0 20 20"><path d="M3 1V19" stroke="#334" stroke-width="4" /><path d="M4 2Q8 0 12 4Q15 7 19 5L18 12Q12 14 9 11L4 11Z" fill="#fff" stroke="#445" /><path d="M3 1V19" stroke="#fff" stroke-width="2" /></svg>
      <svg class="sys" viewBox="0 0 20 20"><path d="M3 2H11V19H1V2Z" fill="#525b66" stroke="#2d343c" stroke-width="2" /><path d="M2 2H10V18" fill="none" stroke="#c8cdd2" /><path d="M1 10L10 19M10 10L1 19" stroke="#e01010" stroke-width="3" /><path d="M14 2V6M18 2V6M12 6H20V10L17 13H15L12 10ZM16 13V19" fill="#fff" stroke="#fff" stroke-width="2" /></svg>
      <svg class="sys" viewBox="0 0 20 20"><path d="M2 15v3M6 12v6M10 9v9M14 6v12M18 3v15" stroke="#344" stroke-width="4" /><path d="M2 15v3M6 12v6M10 9v9M14 6v12M18 3v15" stroke="#fff" stroke-width="3" /></svg>
      <svg class="sys" viewBox="0 0 20 20"><path d="M1 7H4L9 2V18L4 13H1Z" fill="#fff" stroke="#445" /><path d="M12 7Q14 10 12 13M15 5Q18 10 15 15M17 3Q22 10 17 17" fill="none" stroke="#fff" /></svg>
      <div class="clock"><div>13:19</div><div>18.02.2022</div></div><button class="peek" aria-label="Свернуть все окна"></button></div>`;
  }

  render() {
    return html`${this.defs()}
      <header class="title">${icon("freecad", "i18")}<h1>FreeCAD 0.18</h1>
        <div class="winset">
          <button class="win" aria-label="Свернуть"><svg width="18" height="6" viewBox="0 0 18 6"><rect x="1" y="1" width="16" height="4" rx="1" fill="#fff" stroke="#555f6c" /></svg></button>
          <button class="win" aria-label="Развернуть"><svg width="16" height="14" viewBox="0 0 16 14"><path d="M1 1H15V13H1ZM5 5V9H11V5Z" fill="#fff" fill-rule="evenodd" stroke="#555f6c" /></svg></button>
          <button class="win close" aria-label="Закрыть"><svg width="18" height="14" viewBox="0 0 18 14"><path d="M3 2L15 12M15 2L3 12" stroke="#5a3a38" stroke-width="6" /><path d="M3 2L15 12M15 2L3 12" stroke="#fff" stroke-width="4" /></svg></button>
        </div>
      </header>
      <nav class="menu">${MENU.map((m) => html`<a href="#">${m}</a>`)}</nav>
      <div class="bar">${GROUP_A.map((g) => this.group(g))}
        <div class="group"><span class="handle"></span>
          <label class="bench">${icon("bluebox", "lead")}<select aria-label="Верстак" @change=${(e: Event) => (this.workbench = (e.target as HTMLSelectElement).value)}><option>${this.workbench}</option></select>${this.chevron("chev")}</label>
        </div>
      </div>
      <div class="bar">${GROUP_B.map((g) => this.group(g))}</div>
      <main class="view">
        ${this.scene()}${this.nav()}
        <svg class="pointer" viewBox="680 139 44 184" aria-hidden="true"><path d="M702 145L718 230H711V320H693V230H686Z" fill="none" stroke="#e81c24" stroke-width="4" /></svg>
        <svg class="axes" viewBox="0 0 50 60" aria-hidden="true"><path d="M7 30V13" stroke="#22228a" stroke-width="2" /><path d="M4 16L7 12L10 16L7 19Z" fill="#22228a" /><path d="M7 30V46" stroke="#228b22" stroke-width="2" /><path d="M4 42L7 39L10 42L7 47Z" fill="#228b22" /><path d="M7 29H36" stroke="#8b2222" stroke-width="2" /><path d="M26 26L34 29L26 32Z" fill="#8b2222" />
          <text x="9" y="12">Z</text><text x="38" y="31">X</text><text x="9" y="47">Y</text></svg>
        ${this.panel()}
        <svg class="ring" viewBox="0 0 188 70" aria-hidden="true"><ellipse cx="100" cy="35" rx="91" ry="31" fill="none" stroke="#e81c24" stroke-width="5" /></svg>
      </main>
      <div class="docs"><div class="doctab">${icon("freecad", "i18")}<span>Безымянный : 1*</span><button aria-label="Закрыть документ"><svg width="8" height="8" viewBox="0 0 8 8"><path d="M1 1L7 7M7 1L1 7" stroke="#fff" stroke-width="2" /></svg></button></div></div>
      <footer class="task">
        <button class="start" aria-label="Пуск"><svg width="42" height="42" viewBox="0 0 126 126"><circle cx="63" cy="63" r="62" fill="#b9cfe2" /><circle cx="63" cy="63" r="59" fill="url(#orb)" /><path d="M12 44A54 54 0 0 1 114 44Q60 70 12 44Z" fill="#b9dcf0" opacity=".45" /><ellipse cx="63" cy="108" rx="34" ry="12" fill="#2ad4f8" opacity=".7" />
          <path d="M34 30Q48 18 66 28L60 58Q44 50 26 60Z" fill="#ef6a2a" /><path d="M70 30Q86 38 104 28L96 60Q80 68 64 60Z" fill="#9cc93c" /><path d="M25 66Q42 56 58 64L52 94Q36 86 18 94Z" fill="#4a9ad8" /><path d="M63 66Q78 74 95 66L88 94Q72 104 56 96Z" fill="#fccb3a" /></svg></button>
        <span class="grip"></span>
        <div class="apps">${TASKS.map((t) => html`<button class="app ${t.open ?? ""}" aria-label=${t.label}><svg viewBox="0 0 120 120">${taskIcons[t.id]()}</svg></button>`)}</div>
        ${this.tray()}
      </footer>`;
  }
}
